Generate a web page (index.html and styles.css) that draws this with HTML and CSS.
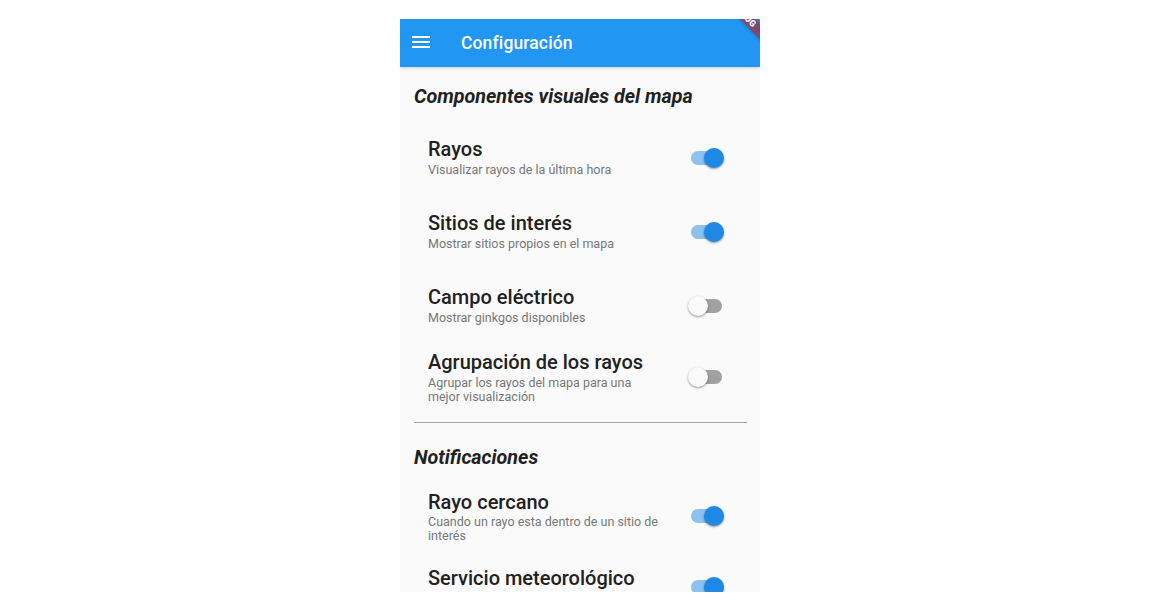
FILE: index.html
```html
<!DOCTYPE html>
<html lang="es">
<head>
<meta charset="utf-8">
<title>Configuración</title>
<link rel="stylesheet" href="styles.css">
</head>
<body>
<div class="screen">
  <header class="appbar">
    <svg class="menu-icon" viewBox="0 0 24 24" width="24" height="24" aria-hidden="true">
      <path d="M3 18h18v-2H3v2zm0-5h18v-2H3v2zm0-7v2h18V6H3z" fill="#fff"/>
    </svg>
    <h1 class="appbar-title">Configuración</h1>
    <div class="debug-banner"><span>DEBUG</span></div>
  </header>
  <main class="content">
    <h2 class="section-title">Componentes visuales del mapa</h2>

    <div class="tile tile--two">
      <div class="tile-text">
        <div class="tile-title">Rayos</div>
        <div class="tile-sub">Visualizar rayos de la última hora</div>
      </div>
      <span class="switch switch--on"><span class="track"></span><span class="thumb"></span></span>
    </div>

    <div class="tile tile--two">
      <div class="tile-text">
        <div class="tile-title">Sitios de interés</div>
        <div class="tile-sub">Mostrar sitios propios en el mapa</div>
      </div>
      <span class="switch switch--on"><span class="track"></span><span class="thumb"></span></span>
    </div>

    <div class="tile tile--two">
      <div class="tile-text">
        <div class="tile-title">Campo eléctrico</div>
        <div class="tile-sub">Mostrar ginkgos disponibles</div>
      </div>
      <span class="switch"><span class="track"></span><span class="thumb"></span></span>
    </div>

    <div class="tile">
      <div class="tile-text">
        <div class="tile-title">Agrupación de los rayos</div>
        <div class="tile-sub">Agrupar los rayos del mapa para una mejor visualización</div>
      </div>
      <span class="switch"><span class="track"></span><span class="thumb"></span></span>
    </div>

    <hr class="divider">

    <h2 class="section-title section-title--second">Notificaciones</h2>

    <div class="tile">
      <div class="tile-text">
        <div class="tile-title">Rayo cercano</div>
        <div class="tile-sub">Cuando un rayo esta dentro de un sitio de interés</div>
      </div>
      <span class="switch switch--on"><span class="track"></span><span class="thumb"></span></span>
    </div>

    <div class="tile tile--two">
      <div class="tile-text">
        <div class="tile-title">Servicio meteorológico</div>
        <div class="tile-sub">Avisos del servicio meteorológico</div>
      </div>
      <span class="switch switch--on"><span class="track"></span><span class="thumb"></span></span>
    </div>
  </main>
</div>
</body>
</html>
```

FILE: styles.css
```css
* { box-sizing: border-box; }

html, body {
  margin: 0;
  padding: 0;
  background: #ffffff;
}

body {
  display: flex;
  justify-content: center;
  padding-top: 19px;
  font-family: Roboto, "Noto Sans", "Liberation Sans", sans-serif;
  color: #212121;
}

.screen {
  position: relative;
  width: 360px;
  height: 573px;
  background: #fafafa;
  overflow: hidden;
}

.appbar {
  position: relative;
  display: flex;
  align-items: center;
  gap: 28px;
  height: 48px;
  padding-left: 9px;
  background: #2196f3;
  box-shadow: 0 1px 3px rgba(0, 0, 0, 0.18);
  overflow: hidden;
  z-index: 1;
}

.menu-icon {
  display: block;
  flex: none;
  margin-bottom: 2px;
}

.appbar-title {
  margin: 0;
  font-size: 17.5px;
  font-weight: 500;
  letter-spacing: 0.13px;
  color: #ffffff;
  line-height: 20px;
  padding-bottom: 1px;
}

.debug-banner {
  position: absolute;
  left: 304px;
  top: -9px;
  width: 80px;
  height: 11px;
  background: rgba(183, 28, 28, 0.63);
  transform: rotate(45deg);
  display: flex;
  align-items: center;
  justify-content: center;
  box-shadow: 0 0 4px rgba(0, 0, 0, 0.35);
}

.debug-banner span {
  font-size: 8.9px;
  font-weight: 900;
  line-height: 1;
  color: #ffffff;
  letter-spacing: 0.2px;
}

.content {
  padding: 0 14px;
}

.section-title {
  margin: 18px 0 12px;
  font-size: 19.7px;
  line-height: 24px;
  font-style: italic;
  font-weight: 700;
  color: #212121;
}

.section-title--second {
  margin: 23px 0 13px;
}

.tile {
  display: flex;
  align-items: center;
  justify-content: space-between;
  padding: 7px 22px 7px 14px;
}

.tile--two {
  min-height: 74px;
}

.tile-text {
  flex: 1;
  max-width: 236px;
}

.tile--two .tile-text {
  padding-bottom: 2px;
}

.tile-title {
  font-size: 20px;
  line-height: 24px;
  font-weight: 500;
  color: #212121;
}

.tile-sub {
  margin-top: 1.5px;
  font-size: 12.5px;
  line-height: 14px;
  color: #777777;
}

.switch {
  position: relative;
  flex: none;
  width: 36px;
  height: 20px;
}

.switch .track {
  position: absolute;
  left: 3px;
  top: 3px;
  width: 31px;
  height: 14px;
  border-radius: 7px;
  background: #a1a1a1;
}

.switch .thumb {
  position: absolute;
  left: 0;
  top: 0;
  width: 20px;
  height: 20px;
  border-radius: 50%;
  background: #fafafa;
  box-shadow: 0 1px 2px rgba(0, 0, 0, 0.3), 0 1px 3px rgba(0, 0, 0, 0.15);
}

.switch--on .track {
  background: rgba(30, 136, 229, 0.5);
}

.switch--on .thumb {
  left: 16px;
  background: #1e88e5;
}

.divider {
  margin: 11px -1px 0 0;
  height: 1px;
  border: 0;
  background: #a3a3a3;
}
```
